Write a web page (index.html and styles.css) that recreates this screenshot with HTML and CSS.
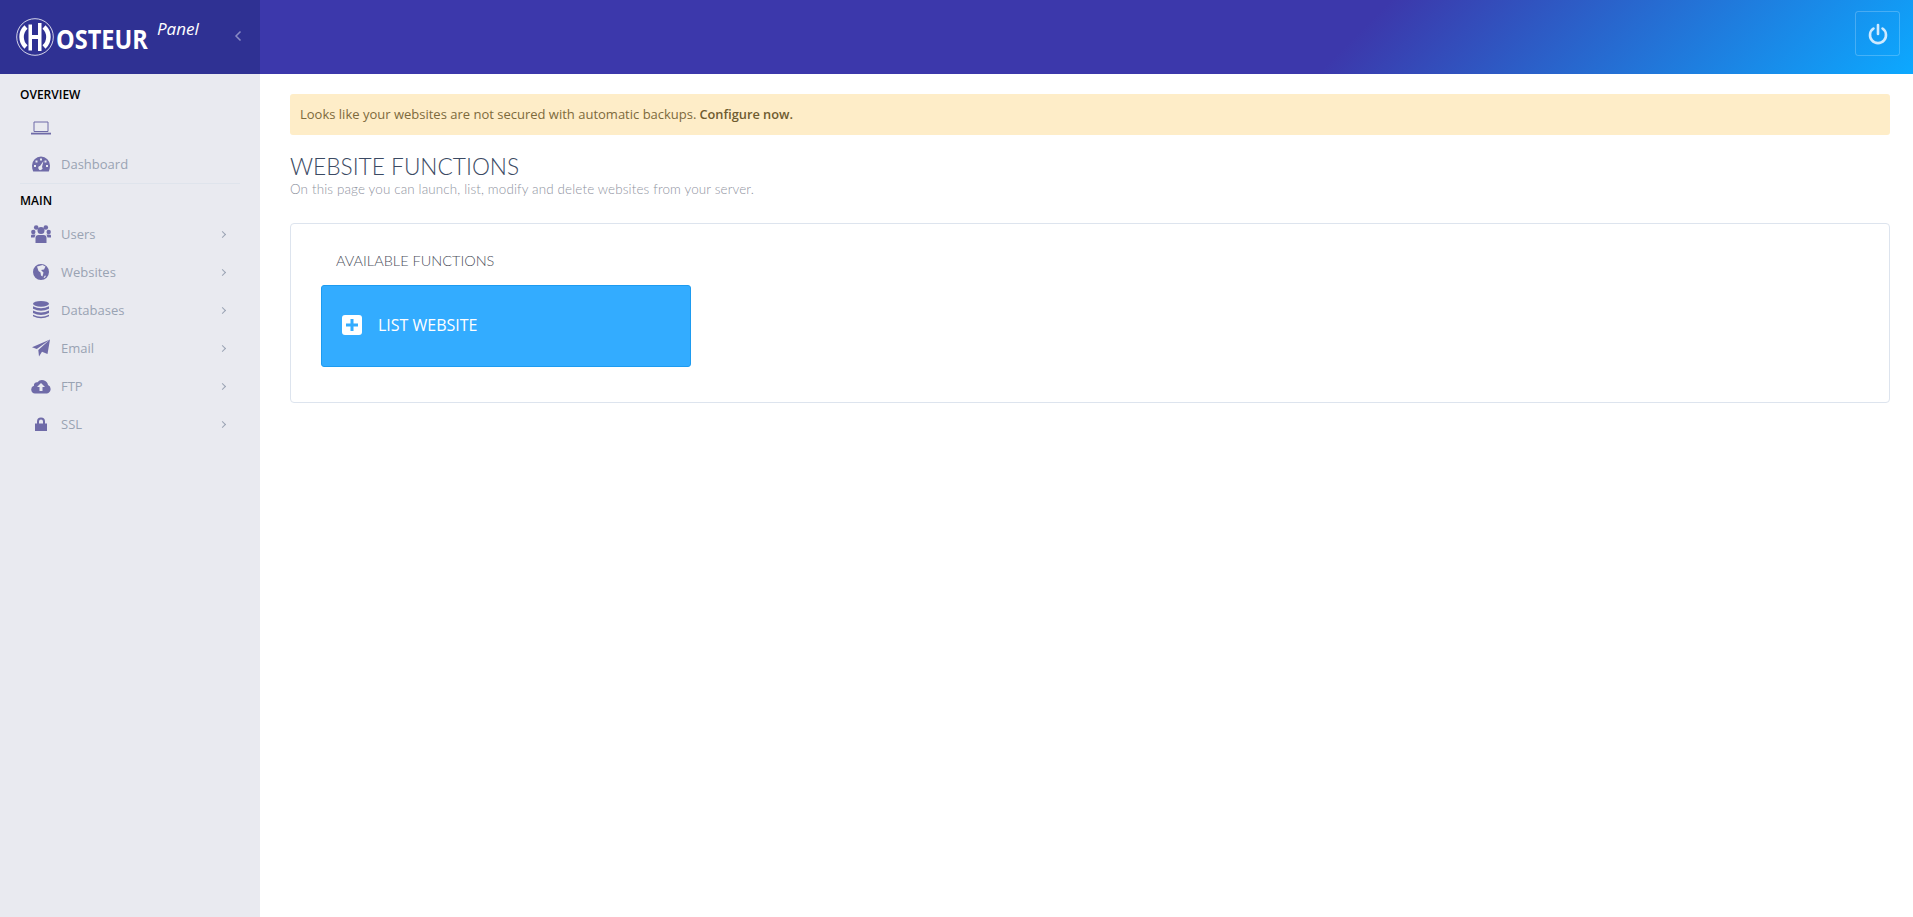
FILE: index.html
```html
<!DOCTYPE html>
<html lang="en">
<head>
<meta charset="utf-8">
<title>Website Functions</title>
<link rel="stylesheet" href="styles.css">
</head>
<body>
<header class="topbar">
  <div class="brand">
    <svg class="logo-mark" viewBox="0 0 38 38" width="38" height="38">
      <circle cx="19" cy="19" r="18.300" fill="none" stroke="#fff" stroke-width="0.800"/>
      <path d="M10 9A13.500 13.500 0 0 0 10 29" fill="none" stroke="#fff" stroke-width="4.500"/>
      <path d="M28 9A13.500 13.500 0 0 1 28 29" fill="none" stroke="#fff" stroke-width="4.500"/>
      <path d="M12.500 6.500h3.500V17h6V5h3.500v28H22V21h-6v11.500h-3.500Z" fill="#fff"/>
    </svg>
    <span class="logo-text">OSTEUR</span>
    <span class="logo-panel">Panel</span>
    <svg class="collapse" viewBox="0 0 8 12" width="8" height="12"><path d="M6.500 1.500 2 6l4.500 4.500" fill="none" stroke="#8a8cc4" stroke-width="1.500"/></svg>
  </div>
  <button class="power" aria-label="Log out">
    <svg viewBox="0 0 20 22" width="20" height="22"><path d="M5.500 5.500a8 8 0 1 0 9 0" fill="none" stroke="#cfeaff" stroke-width="2.600" stroke-linecap="round"/><path d="M10 2v9" stroke="#cfeaff" stroke-width="2.600" stroke-linecap="round"/></svg>
  </button>
</header>
<div class="shell">
  <aside class="sidebar">
    <div class="nav-label">OVERVIEW</div>
    <a class="nav-item nav-item-short">
      <svg class="nav-icon" viewBox="0 0 20 13"><path d="M3 .5h14v9.500H3Z" fill="none" stroke="#6f6ba8" stroke-width="1"/><path d="M0 11.200h20V13H0Z" fill="#6f6ba8"/></svg>
    </a>
    <a class="nav-item nav-item-short nav-item-last">
      <svg class="nav-icon" viewBox="0 0 20 15"><path fill-rule="evenodd" d="M10 0a9 9 0 0 1 9 9c0 2.200-.4 4.200-1.200 6H2.200C1.400 13.200 1 11.200 1 9a9 9 0 0 1 9-9ZM9 2v2h2V2ZM4.500 4v2h2V4ZM13.500 4v2h2V4ZM3 8.500v2h2v-2ZM15 8.500v2h2v-2ZM12.500 4.500 9 9.600a2 2 0 1 0 2 .8Z" fill="#6f6ba8"/></svg>
      <span class="nav-text">Dashboard</span>
    </a>
    <div class="nav-label nav-label-main">MAIN</div>
    <a class="nav-item">
      <svg class="nav-icon" viewBox="0 0 20 18"><g fill="#6f6ba8"><circle cx="5.200" cy="2.500" r="2.300"/><circle cx="14.800" cy="2.500" r="2.300"/><circle cx="10" cy="5.500" r="3.500"/><circle cx="2.300" cy="7" r="2.200"/><circle cx="17.700" cy="7" r="2.200"/><path d="M4.500 18V13Q4.500 10 7.500 10H12.500Q15.500 10 15.500 13V18Z"/><path d="M0 12.500V10.500Q0 9.500 2 9.500H4.500L3.500 12.500ZM20 12.500V10.500Q20 9.500 18 9.500H15.500L16.500 12.500Z"/></g></svg>
      <span class="nav-text">Users</span><span class="chev"></span>
    </a>
    <a class="nav-item">
      <svg class="nav-icon" viewBox="0 0 20 20"><path fill-rule="evenodd" d="M10 2a8 8 0 1 1 0 16 8 8 0 0 1 0-16ZM6 4.500 7.500 9l2 1.500.5 3 1.500 1 1-4-2.500-2.500 3-.5 1.500-3-3-1.500L8 4ZM12.500 15.500l1 .5 1.500-2-1-.5Z" fill="#6f6ba8"/></svg>
      <span class="nav-text">Websites</span><span class="chev"></span>
    </a>
    <a class="nav-item">
      <svg class="nav-icon" viewBox="0 0 20 20"><g fill="#6f6ba8"><ellipse cx="10" cy="3.800" rx="8" ry="2.900"/><path d="M2 6.200Q10 10.200 18 6.200V8.700Q10 12.700 2 8.700Z"/><path d="M2 10.500Q10 14.500 18 10.500V13Q10 17 2 13Z"/><path d="M2 14.800Q10 18.800 18 14.800V16.300Q10 20.300 2 16.300Z"/></g></svg>
      <span class="nav-text">Databases</span><span class="chev"></span>
    </a>
    <a class="nav-item">
      <svg class="nav-icon" viewBox="0 0 20 20"><path d="M19 1.500 16.500 16 11 13.800 8 18.500 7.300 12ZM19 1.500 5.800 11 1 9.200Z" fill="#6f6ba8"/></svg>
      <span class="nav-text">Email</span><span class="chev"></span>
    </a>
    <a class="nav-item">
      <svg class="nav-icon" viewBox="0 0 20 15"><path fill-rule="evenodd" d="M4 15a4 4 0 0 1-1-7.800 3 3 0 0 1 3.500-3.500A6 6 0 0 1 17 6.500 4.500 4.500 0 0 1 16 15ZM10 4.500 6 8.500H8.500V12.500H11.500V8.500H14Z" fill="#6f6ba8"/></svg>
      <span class="nav-text">FTP</span><span class="chev"></span>
    </a>
    <a class="nav-item">
      <svg class="nav-icon" viewBox="0 0 20 20"><path fill-rule="evenodd" d="M6 9.500V7.500a4 4 0 0 1 8 0v2h2V17H4V9.500ZM8 9.500h4v-2a2 2 0 0 0-4 0Z" fill="#6f6ba8"/></svg>
      <span class="nav-text">SSL</span><span class="chev"></span>
    </a>
  </aside>
  <main class="content">
    <div class="alert">Looks like your websites are not secured with automatic backups. <strong>Configure now.</strong></div>
    <h1 class="page-title">WEBSITE FUNCTIONS</h1>
    <p class="page-sub">On this page you can launch, list, modify and delete websites from your server.</p>
    <section class="card">
      <h2 class="card-title">AVAILABLE FUNCTIONS</h2>
      <a class="tile">
        <svg class="tile-icon" viewBox="0 0 20 20" width="20" height="20"><rect width="20" height="20" rx="3" fill="#fff"/><path d="M8.500 4h3v4.500H16v3h-4.500V16h-3v-4.500H4v-3h4.500Z" fill="#33acff"/></svg>
        <span>LIST WEBSITE</span>
      </a>
    </section>
  </main>
</div>
</body>
</html>
```
FILE: styles.css
```css
* { box-sizing: border-box; }
html, body { margin: 0; height: 100%; }
body {
  font-family: "Open Sans", "Liberation Sans", sans-serif;
  background: #fff;
  overflow: hidden;
}
.topbar {
  height: 74px;
  display: flex;
  justify-content: space-between;
  align-items: flex-start;
  background: linear-gradient(135deg, #3c38ab 0%, #3c38ab 70%, #0ca9ff 100%);
  padding-right: 13px;
}
.brand {
  width: 260px;
  height: 74px;
  background: #2f3193;
  display: flex;
  align-items: center;
  padding-left: 16px;
  color: #fff;
  position: relative;
}
.logo-mark { flex: none; }
.logo-text {
  font-family: "Open Sans", sans-serif;
  font-weight: 700;
  font-size: 27px;
  display: inline-block;
  transform: scaleX(0.87);
  transform-origin: left center;
  margin-left: 2px;
  margin-top: 3px;
  width: 92px;
}
.logo-panel {
  position: absolute;
  left: 157px;
  top: 17px;
  font-style: italic;
  font-size: 17px;
}
.collapse { position: absolute; left: 234px; top: 30px; }
.power {
  width: 45px;
  height: 45px;
  margin-top: 11px;
  padding: 0;
  display: flex;
  align-items: center;
  justify-content: center;
  background: transparent;
  border: 1.500px solid rgba(255, 255, 255, 0.22);
  border-radius: 3px;
}
.shell { display: flex; height: calc(100% - 74px); }
.sidebar {
  width: 260px;
  flex: none;
  background: #e9eaf0;
  padding: 11px 0 0 20px;
}
.nav-label {
  font-size: 12px;
  font-weight: 600;
  color: #000;
  line-height: 20px;
}
.nav-label-main { margin: 7px 0 4px; }
.nav-item {
  height: 38px;
  display: flex;
  align-items: center;
  width: 220px;
  padding-left: 11px;
}
.nav-item-short { height: 36px; }
.nav-item-short:first-of-type { margin-top: 5px; }
.nav-item-last { height: 38px; padding-bottom: 2px; border-bottom: 1px solid #dfe4ec; }
.nav-icon { width: 20px; height: 20px; flex: none; }
.nav-text {
  margin-left: 10px;
  font-size: 13px;
  color: #99a3b3;
}
.chev {
  margin-left: auto;
  margin-right: 15px;
  width: 5px;
  height: 5px;
  border-top: 1px solid #9aa3b4;
  border-right: 1px solid #9aa3b4;
  transform: rotate(45deg);
}
.content { flex: 1; padding: 20px 23px 0 30px; min-width: 0; }
.alert {
  height: 41px;
  display: flex;
  align-items: center;
  gap: 3px;
  padding-left: 10px;
  background: #feedc8;
  border-radius: 3px;
  font-size: 13px;
  color: #7d6a3c;
  padding-bottom: 1px;
}
.alert strong { font-weight: 600; font-size: 12.800px; color: #6f5c30; }
.page-title {
  margin: 19px 0 0;
  font-family: Lato, sans-serif;
  font-weight: 300;
  font-size: 22.700px;
  line-height: 26px;
  color: #3b4a63;
}
.page-sub {
  margin: 0;
  font-family: Lato, sans-serif;
  font-weight: 300;
  font-size: 13.400px;
  letter-spacing: 0.150px;
  line-height: 18px;
  color: #8f93a0;
}
.card {
  margin-top: 25px;
  height: 180px;
  border: 1px solid #dde4ee;
  border-radius: 4px;
  padding: 28px 30px 0;
}
.card-title {
  margin: 0 0 15px 15px;
  font-family: Lato, sans-serif;
  font-weight: 300;
  font-size: 14.500px;
  line-height: 18px;
  color: #4c4f5c;
}
.tile {
  width: 370px;
  height: 82px;
  display: flex;
  align-items: center;
  gap: 16px;
  padding: 0 0 2px 20px;
  background: #33acff;
  border: 1px solid #1d9bf0;
  border-radius: 3px;
  color: #fff;
  font-size: 16px;
}
.tile-icon { flex: none; }
```
